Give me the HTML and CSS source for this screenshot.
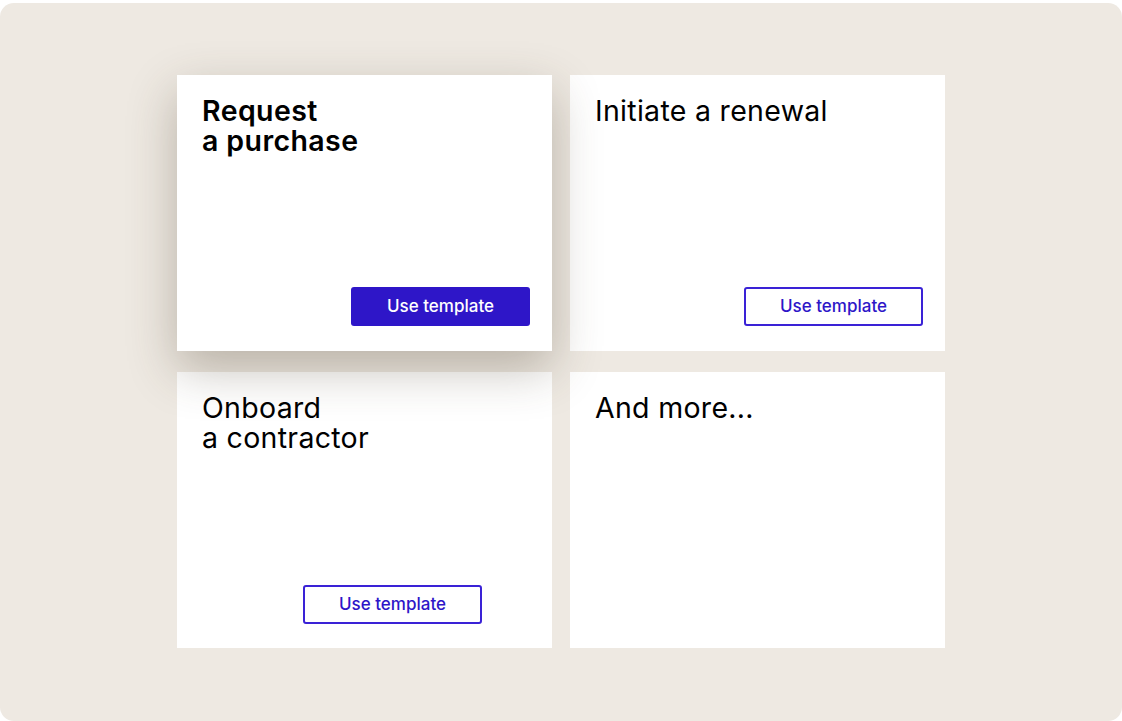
FILE: index.html
```html
<!DOCTYPE html>
<html lang="en">
<head>
<meta charset="utf-8">
<title>Templates</title>
<link rel="stylesheet" href="styles.css">
</head>
<body>
  <main class="frame">
    <div class="grid">
      <section class="card card-active">
        <h2 class="title title-bold">Request<br>a purchase</h2>
        <button class="btn btn-filled">Use template</button>
      </section>
      <section class="card">
        <h2 class="title">Initiate a renewal</h2>
        <button class="btn btn-outline">Use template</button>
      </section>
      <section class="card">
        <h2 class="title">Onboard<br>a contractor</h2>
        <button class="btn btn-outline btn-shifted">Use template</button>
      </section>
      <section class="card">
        <h2 class="title">And more...</h2>
      </section>
    </div>
  </main>
</body>
</html>
```

FILE: styles.css
```css
* { box-sizing: border-box; }

html, body {
  margin: 0;
  padding: 0;
  background: #ffffff;
  width: 1122px;
  height: 721px;
  overflow: hidden;
  font-family: "Inter", "Liberation Sans", sans-serif;
}

.frame {
  margin-top: 3px;
  height: 718px;
  background: #eee9e2;
  border-radius: 14px;
  padding-top: 72px;
}

.grid {
  display: grid;
  grid-template-columns: 375px 375px;
  grid-template-rows: 276px 276px;
  column-gap: 18px;
  row-gap: 21px;
  justify-content: center;
}

.card {
  position: relative;
  background: #ffffff;
  display: flex;
  flex-direction: column;
  justify-content: space-between;
  padding: 21px 22px 25px 25px;
}

.card-active {
  z-index: 2;
  box-shadow: 0 18px 46px rgba(70, 60, 40, 0.32);
}

.title {
  margin: 0;
  font-size: 28.5px;
  line-height: 30px;
  font-weight: 400;
  color: #000000;
  letter-spacing: 0.3px;
}

.title-bold {
  font-weight: 600;
  letter-spacing: 0.4px;
}

.btn {
  align-self: flex-end;
  width: 179px;
  height: 39px;
  border-radius: 3px;
  font-family: "Inter", "Liberation Sans", sans-serif;
  font-size: 17px;
  font-weight: 500;
  padding: 0 0 2px;
  cursor: pointer;
}

.btn-filled {
  background: #2e16c8;
  color: #ffffff;
  border: 0;
}

.btn-outline {
  background: #ffffff;
  color: #2e16c8;
  border: 2px solid #3a22d6;
}

.btn-shifted {
  margin-right: 48px;
  margin-bottom: -1px;
}
```
